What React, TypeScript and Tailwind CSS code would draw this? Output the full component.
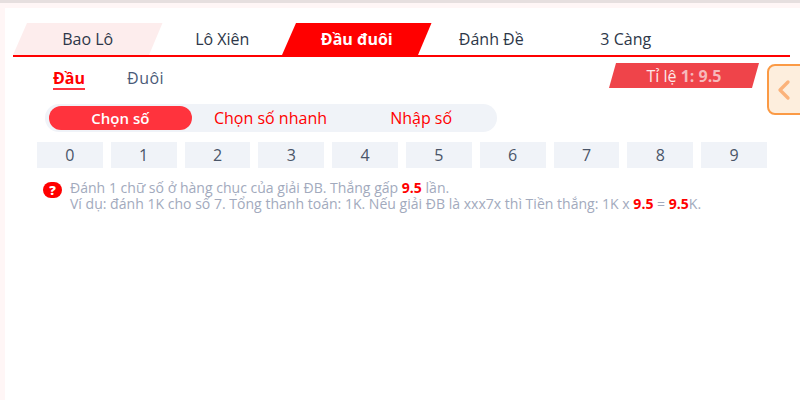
import { ChevronLeft } from 'lucide-react';

const tabs = ['Bao Lô', 'Lô Xiên', 'Đầu đuôi', 'Đánh Đề', '3 Càng'];
const numbers = [0, 1, 2, 3, 4, 5, 6, 7, 8, 9];

export default function App() {
  return (
    <div className="relative h-[400px] w-[800px] overflow-hidden bg-[#fff6f6] font-['Open_Sans',sans-serif]">
      <div className="h-[3px] bg-[#e6dfdf]" />
      <div className="ml-[5px] mt-[5px] h-[392px] bg-white pl-2 pr-[10px] pt-[15px]">
        {/* game tabs */}
        <div className="flex h-[34px] border-b-2 border-[#ff0000]">
          {tabs.map((tab) => (
            <div
              key={tab}
              className={
                tab === 'Đầu đuôi'
                  ? "mr-[-15px] flex h-[32px] w-[149.5px] items-center justify-center bg-[#ff0000] text-[16px] font-bold text-white [clip-path:polygon(14px_0,100%_0,136px_100%,0_100%)]"
                  : tab === 'Bao Lô'
                    ? "mr-[-15px] flex h-[32px] w-[149.5px] items-center justify-center bg-[#fdeded] text-[16px] text-[#2d3748] [clip-path:polygon(14px_0,100%_0,136px_100%,0_100%)]"
                    : 'mr-[-15px] flex h-[32px] w-[149.5px] items-center justify-center text-[16px] text-[#2d3748]'
              }
            >
              {tab}
            </div>
          ))}
        </div>

        <div className="flex items-start justify-between pr-[31px] pt-[6px]">
          <div className="flex gap-[42px] pl-10 pt-[6px] text-[16px]">
            <span className="border-b-2 border-[#ff3340] font-bold leading-[19px] text-[#ff0000]">Đầu</span>
            <span className="font-medium leading-[19px] tracking-[0.5px] text-[#4a5a78]">Đuôi</span>
          </div>
          <div className="flex h-[25px] w-[150px] items-center justify-center bg-[#ef444a] text-[16px] text-[#fde8e8] [clip-path:polygon(7px_0,100%_0,143px_100%,0_100%)]">
            Tỉ lệ&nbsp;<b className="text-[#f6b9bb]">1: 9.5</b>
          </div>
        </div>

        {/* input mode */}
        <div className="ml-8 mt-[14px] flex h-7 w-[452px] items-center rounded-full bg-[#f0f3f8] px-1 text-[16px] text-[#ff0000]">
          <div className="flex h-6 w-[143px] items-center justify-center rounded-full bg-[#ff333d] text-[15px] font-semibold text-white">
            Chọn số
          </div>
          <div className="w-[158px] text-center">Chọn số nhanh</div>
          <div className="w-[144px] text-center">Nhập số</div>
        </div>

        <div className="ml-6 mt-[10px] grid w-[730px] grid-cols-10 gap-2">
          {numbers.map((n) => (
            <div key={n} className="flex h-[26px] items-center justify-center bg-[#f0f3f8] text-[16px] text-[#4a5568]">
              {n}
            </div>
          ))}
        </div>

        <div className="ml-[30px] mt-[12px] flex gap-2 text-[14.06px] leading-4 text-[#a2aabd]">
          <div className="mt-[2px] flex h-4 w-[19px] shrink-0 items-center justify-center rounded-full bg-[#ff0000] text-[13px] font-extrabold text-white">
            ?
          </div>
          <div>
            <div>
              Đánh 1 chữ số ở hàng chục của giải ĐB. Thắng gấp <b className="text-[#ff0000]">9.5</b> lần.
            </div>
            <div>
              Ví dụ: đánh 1K cho số 7. Tổng thanh toán: 1K. Nếu giải ĐB là xxx7x thì Tiền thắng: 1K x{' '}
              <b className="text-[#ff0000]">9.5</b> = <b className="text-[#ff0000]">9.5</b>K.
            </div>
          </div>
        </div>
      </div>

      {/* side drawer handle */}
      <div className="absolute left-[767px] top-[64px] flex h-[51px] w-[40px] items-center rounded-lg border-2 border-[#fb9a45] bg-[#fdeedd]">
        <ChevronLeft className="ml-[-1.5px] h-8 w-8 shrink-0 text-[#fbb27a]" strokeWidth={2.5} />
      </div>
    </div>
  );
}
